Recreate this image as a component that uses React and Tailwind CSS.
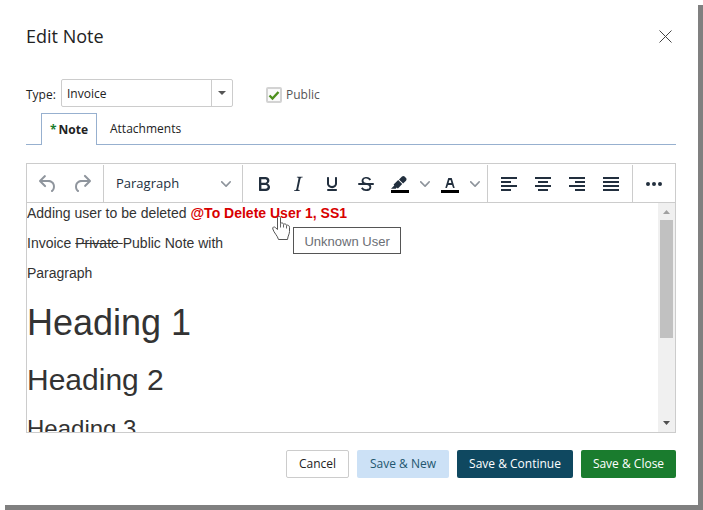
import React, { useState } from 'react';

const ICONS = {
  undo: ['M6.4 8H12c3.7 0 6.2 2 6.8 5.1.6 2.7-.4 5.6-2.3 6.8a1 1 0 01-1-1.8c1.1-.6 1.8-2.7 1.4-4.6-.5-2.1-2.1-3.5-4.9-3.5H6.4l3.3 3.3a1 1 0 11-1.4 1.4l-5-5a1 1 0 010-1.4l5-5a1 1 0 011.4 1.4L6.4 8z'],
  redo: ['M17.6 10H12c-2.8 0-4.4 1.4-4.9 3.5-.4 2 .3 4 1.4 4.6a1 1 0 11-1 1.8c-2-1.2-2.9-4.1-2.3-6.8.6-3 3-5.1 6.8-5.1h5.6l-3.3-3.3a1 1 0 111.4-1.4l5 5a1 1 0 010 1.4l-5 5a1 1 0 01-1.4-1.4l3.3-3.3z'],
  bold: ['M7.8 19c-.3 0-.5 0-.6-.2l-.2-.5V5.7c0-.2 0-.4.2-.5l.6-.2h5c1.5 0 2.7.3 3.5 1 .7.6 1.1 1.4 1.1 2.5a3 3 0 01-.6 1.9c-.4.6-1 1-1.6 1.2.4.1.9.3 1.3.6s.8.7 1 1.2c.4.4.5 1 .5 1.6 0 1.3-.4 2.3-1.3 3-.8.7-2.1 1-3.8 1H7.8zm5-8.3c.6 0 1.2-.1 1.6-.5.4-.3.6-.7.6-1.3 0-1.1-.8-1.7-2.3-1.7H9.3v3.5h3.4zm.5 6c.7 0 1.3-.1 1.7-.4.4-.4.6-.9.6-1.5s-.2-1-.7-1.4c-.4-.3-1-.4-2-.4H9.4v3.8h4z'],
  italic: ['M16.7 4.7l-.1.9h-.3c-.6 0-1 0-1.4.3-.3.3-.4.6-.5 1.1l-2.1 9.8v.6c0 .5.4.8 1.4.8h.2l-.2.8H8l.2-.8h.2c1.1 0 1.8-.5 2-1.5l2-9.8.1-.5c0-.6-.4-.8-1.4-.8h-.3l.2-.9h5.8z'],
  underline: ['M16 5c.6 0 1 .4 1 1v5.5a4 4 0 01-.4 1.8l-1 1.4a5.3 5.3 0 01-5.5 1 5 5 0 01-1.6-1c-.5-.4-.8-.9-1.1-1.4a4 4 0 01-.4-1.8V6c0-.6.4-1 1-1s1 .4 1 1v5.5c0 .3 0 .6.2 1l.6.7a3.3 3.3 0 002.2.8 3.4 3.4 0 002.2-.8c.3-.2.4-.5.6-.8l.2-.9V6c0-.6.4-1 1-1zM8 17h8c.6 0 1 .4 1 1s-.4 1-1 1H8a1 1 0 010-2z'],
  strike: [
    'M15.6 8.5c-.5-.7-1-1.1-1.3-1.3-.6-.4-1.3-.6-2-.6-2.7 0-2.8 1.7-2.8 2.1 0 1.6 1.8 2 3.2 2.3 4.4.9 4.6 2.8 4.6 3.9 0 1.4-.7 4.1-5 4.1A6.2 6.2 0 017 16.4l1.5-1.1c.4.6 1.6 2 3.7 2 1.6 0 2.5-.4 3-1.2.4-.8.3-2-.8-2.6-.7-.4-1.6-.7-2.9-1-1-.2-3.9-.8-3.9-3.6C7.6 6 10.3 5 12.4 5c2.9 0 4.2 1.6 4.7 2.4l-1.5 1.1z',
    'M5 11h14a1 1 0 010 2H5a1 1 0 010-2z',
  ],
  highlight: ['M7.7 16.7H3l3.3-3.3-.7-.8L10.2 8l4 4.1-4 4.2c-.2.2-.6.2-.8 0l-.6-.7-1.1 1.1zm5-7.5L11 7.4l3-2.9a2 2 0 012.6 0L18 6c.7.7.7 2 0 2.7l-2.9 2.9-1.8-1.8-.5-.6z'],
  color: ['M8.7 16h-.8a.5.5 0 01-.5-.6l2.7-9c.1-.3.3-.4.5-.4h2.8c.2 0 .4.1.5.4l2.7 9a.5.5 0 01-.5.6h-.8a.5.5 0 01-.4-.4l-.7-2.2c0-.3-.3-.4-.5-.4h-3.4c-.2 0-.4.1-.5.4l-.7 2.2c0 .3-.2.4-.4.4zm2.6-7.6l-.6 2a.5.5 0 00.5.6h1.6a.5.5 0 00.5-.6l-.6-2c0-.3-.3-.4-.5-.4h-.4c-.2 0-.4.1-.5.4z'],
  alignLeft: ['M4 5h16v2H4zM4 9h10v2H4zM4 13h16v2H4zM4 17h10v2H4z'],
  alignCenter: ['M4 5h16v2H4zM7 9h10v2H7zM4 13h16v2H4zM7 17h10v2H7z'],
  alignRight: ['M4 5h16v2H4zM10 9h10v2H10zM4 13h16v2H4zM10 17h10v2H10z'],
  justify: ['M4 5h16v2H4zM4 9h16v2H4zM4 13h16v2H4zM4 17h16v2H4z'],
  more: ['M6 10a2 2 0 100 4 2 2 0 000-4zM12 10a2 2 0 100 4 2 2 0 000-4zM18 10a2 2 0 100 4 2 2 0 000-4z'],
};

const Icon = ({ name, swatch }) => (
  <svg width="24" height="24" viewBox="0 0 24 24" fill="currentColor" aria-hidden="true">
    {swatch && <path d="M3 18h18v3H3z" fill="#000" />}
    {ICONS[name].map((d) => <path key={d} d={d} />)}
  </svg>
);

const Chevron = () => (
  <svg width="10" height="10" viewBox="0 0 10 10" fill="#8d939b" aria-hidden="true">
    <path d="M8.7 2.2c.3-.3.8-.3 1 0 .4.4.4.9 0 1.2L5.7 7.8c-.3.3-.9.3-1.2 0L.2 3.4a.8.8 0 010-1.2c.3-.3.8-.3 1.1 0L5 6l3.7-3.8z" />
  </svg>
);

const ToolButton = ({ icon, label, disabled }) => (
  <button
    type="button"
    aria-label={label}
    disabled={disabled}
    className="flex h-[34px] w-[34px] items-center justify-center text-[#222f3e] disabled:text-[#8f959d]"
  >
    <Icon name={icon} />
  </button>
);

const SplitButton = ({ icon, label }) => (
  <div className="flex text-[#222f3e]">
    <button type="button" aria-label={label} className="flex h-[34px] w-[34px] items-center justify-center">
      <Icon name={icon} swatch />
    </button>
    <button type="button" aria-label={`${label} options`} className="flex h-[34px] w-4 items-center justify-center">
      <Chevron />
    </button>
  </div>
);

const ToolGroup = ({ children }) => (
  <div className="flex items-center border-r border-[#cccccc] px-1 last:border-r-0">{children}</div>
);

const Toolbar = () => (
  <div role="toolbar" className="flex h-[39px] border-b border-[#cccccc] pt-px">
    <ToolGroup>
      <ToolButton icon="undo" label="Undo" disabled />
      <ToolButton icon="redo" label="Redo" disabled />
    </ToolGroup>
    <ToolGroup>
      <button type="button" className="flex h-[34px] w-[130px] items-center justify-between pr-[7px] pl-2 text-[13px] text-[#222f3e]">
        Paragraph
        <Chevron />
      </button>
    </ToolGroup>
    <ToolGroup>
      <ToolButton icon="bold" label="Bold" />
      <ToolButton icon="italic" label="Italic" />
      <ToolButton icon="underline" label="Underline" />
      <ToolButton icon="strike" label="Strikethrough" />
      <SplitButton icon="highlight" label="Background color" />
      <SplitButton icon="color" label="Text color" />
    </ToolGroup>
    <ToolGroup>
      <ToolButton icon="alignLeft" label="Align left" />
      <ToolButton icon="alignCenter" label="Align center" />
      <ToolButton icon="alignRight" label="Align right" />
      <ToolButton icon="justify" label="Justify" />
    </ToolGroup>
    <ToolGroup>
      <ToolButton icon="more" label="More" />
    </ToolGroup>
  </div>
);

const HandCursor = () => (
  <svg className="absolute top-3 left-[81px]" width="20" height="26" viewBox="0 0 20 26" aria-hidden="true">
    <path
      d="M6.5 14.5V3C6.5.9 9.5.9 9.5 3v5.5c1-1 2.8-.7 3 .8 1-.8 2.800-.4 3 1 1.300-.6 3 .2 3 2v4.200c0 2.500-1.500 4-2 8h-9C6.500 20.500 3 18 1.800 14c-.6-1.900 1.400-2.700 2.500-1.500z"
      fill="#fff"
      stroke="#555"
    />
    <path d="M9.5 8.5v4M12.5 9.5v3M15.5 10.5v3" fill="none" stroke="#666" />
  </svg>
);

const Editor = () => (
  <div className="border border-[#cccccc]">
    <Toolbar />
    <div className="flex h-[229px]">
      <div className="min-w-0 flex-1 overflow-hidden font-['Liberation_Sans',Arial,sans-serif] text-[14px] leading-5 text-[#333]">
        <p className="mb-[10px]">
          Adding user to be deleted{' '}
          <span className="relative inline-block font-bold text-[#d80000]">
            @To Delete User 1, SS1
            <HandCursor />
            <span role="tooltip" className="absolute top-6 left-[103px] border border-[#555] bg-white px-[10px] pt-1 pb-px text-[13px] font-normal whitespace-nowrap text-[#6b6e75]">
              Unknown User
            </span>
          </span>
        </p>
        <p className="mb-[10px]">Invoice <s>Private </s>Public Note with</p>
        <p>Paragraph</p>
        <h1 className="mt-5 text-[36px] leading-10">Heading 1</h1>
        <h2 className="mt-5 text-[30px] leading-[33px]">Heading 2</h2>
        <h3 className="mt-5 text-[24px] leading-[26px]">Heading 3</h3>
      </div>
      <div className="flex w-[17px] flex-col items-center bg-[#f0f0f0]" aria-hidden="true">
        <svg width="17" height="17" viewBox="0 0 17 17"><path d="M5 11h7L8.5 7z" fill="#a0a0a0" /></svg>
        <div className="h-[118px] w-[13px] bg-[#c1c1c1]" />
        <svg className="mt-auto" width="17" height="17" viewBox="0 0 17 17"><path d="M5 6h7L8.5 10z" fill="#505050" /></svg>
      </div>
    </div>
  </div>
);

const App = () => {
  const [type, setType] = useState('Invoice');
  const [isPublic, setIsPublic] = useState(true);

  return (
    <div className="bg-white pr-[5px] pb-[5px] font-['Open_Sans','Noto_Sans',sans-serif] text-[12px] text-[#222]">
      <div role="dialog" aria-labelledby="title" className="bg-white pt-6 pr-[22px] pb-[27px] pl-[26px] shadow-[5px_5px_0_#808080]">
        <header className="flex h-6 items-center justify-between">
          <h1 id="title" className="text-[18px]">Edit Note</h1>
          <button type="button" aria-label="Close" className="pr-1">
            <svg width="13" height="13" viewBox="0 0 13 13" fill="none" stroke="#444" aria-hidden="true">
              <path d="M.5.5l12 12M12.5.5l-12 12" />
            </svg>
          </button>
        </header>

        <div className="mt-[31px] flex items-center">
          <label htmlFor="type" className="w-[35px] pt-1">Type:</label>
          <div className="grid h-7 w-[172px] grid-cols-[1fr_21px] rounded-xs border border-[#cccccc]">
            <select
              id="type"
              value={type}
              onChange={(e) => setType(e.target.value)}
              className="col-span-2 col-start-1 row-start-1 appearance-none bg-transparent pt-[2px] pl-[5px] outline-none"
            >
              <option>Invoice</option>
              <option>Client</option>
            </select>
            <span className="pointer-events-none col-start-2 row-start-1 flex items-center justify-center border-l border-[#cccccc]">
              <svg width="8" height="4" viewBox="0 0 8 4" aria-hidden="true"><path d="M0 0h8L4 4z" fill="#555" /></svg>
            </span>
          </div>
          <label className="ml-[33px] flex items-center gap-1 pt-1 text-[#555]">
            <span className="grid">
              <input
                type="checkbox"
                checked={isPublic}
                onChange={(e) => setIsPublic(e.target.checked)}
                className="col-start-1 row-start-1 h-4 w-4 appearance-none rounded-xs border-2 border-[#d3d3d3] bg-[#fafafa]"
              />
              {isPublic && (
                <svg className="pointer-events-none col-start-1 row-start-1" width="16" height="16" viewBox="0 0 16 16" fill="none" stroke="#4d8f1c" strokeWidth="2.4" aria-hidden="true">
                  <path d="M3.5 8.5l3 3 6-6.500" />
                </svg>
              )}
            </span>
            Public
          </label>
        </div>

        <div role="tablist" className="mt-[6px] flex h-8">
          <span className="w-[15px] border-b border-[#97b0cf]" />
          <button type="button" role="tab" aria-selected="true" className="flex w-14 items-center justify-center gap-[2px] border border-b-0 border-[#97b0cf] font-bold">
            <span className="text-[#1a7c2e]">*</span>
            Note
          </button>
          <button type="button" role="tab" aria-selected="false" className="flex-1 border-b border-[#97b0cf] pl-[13px] text-left">
            Attachments
          </button>
        </div>

        <div className="mt-[18px]">
          <Editor />
        </div>

        <footer className="mt-[17px] flex justify-end gap-2">
          <button type="button" className="h-7 w-[63px] rounded-xs border border-[#cccccc] bg-white">Cancel</button>
          <button type="button" className="h-7 w-[92px] rounded-xs bg-[#cce1f6] text-[#22566f]">Save &amp; New</button>
          <button type="button" className="h-7 w-[116px] rounded-xs bg-[#0f4860] font-medium text-white">Save &amp; Continue</button>
          <button type="button" className="h-7 w-[95px] rounded-xs bg-[#1a7c2e] font-medium text-white">Save &amp; Close</button>
        </footer>
      </div>
    </div>
  );
};

export default App;
